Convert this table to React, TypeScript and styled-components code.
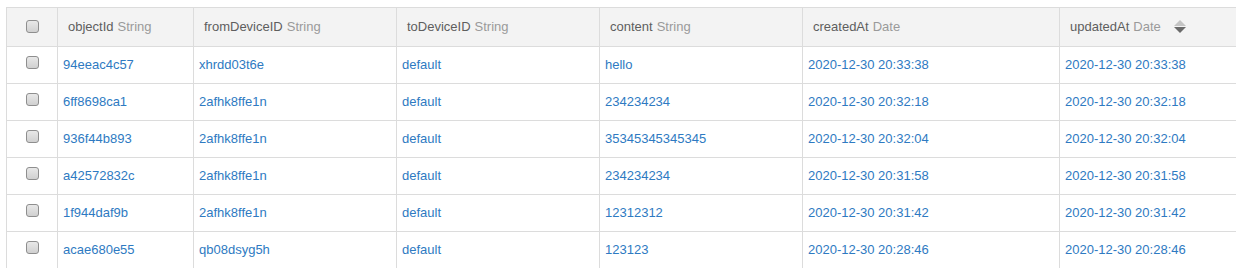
import React from "react";
import styled, { createGlobalStyle } from "styled-components";

const Global = createGlobalStyle`
  html, body { margin: 0; padding: 0; background: #fff; overflow: hidden; }
  body { font-family: "Liberation Sans", Arial, sans-serif; }
`;

const Page = styled.div`
  padding: 7px 0 0 6px;
  width: 1500px;
`;

const Table = styled.div`
  border-top: 1px solid #dcdcdc;
  border-right: 1px solid #dcdcdc;
`;

const COLS = "51px 136px 203px 203px 203px 257px 1fr";

const Row = styled.div<{ $head?: boolean }>`
  display: grid;
  grid-template-columns: ${COLS};
  height: ${(p) => (p.$head ? 38 : 36)}px;
  border-bottom: 1px solid #dcdcdc;
  background: ${(p) => (p.$head ? "#f3f3f3" : "#fff")};
`;

const HeadCell = styled.div`
  display: flex;
  align-items: center;
  padding-left: 10px;
  padding-bottom: 2px;
  border-left: 1px solid #dcdcdc;
  font-size: 13px;
  color: #5e5e5e;
  white-space: nowrap;
`;

const TypeName = styled.span`
  color: #9a9a9a;
  margin-left: 4px;
`;

const Cell = styled.div`
  display: flex;
  align-items: center;
  padding-left: 5px;
  padding-bottom: 1px;
  border-left: 1px solid #dcdcdc;
  font-size: 13px;
  color: #2e7ac2;
  white-space: nowrap;
`;

const CheckCell = styled.div<{ $head?: boolean }>`
  display: flex;
  align-items: center;
  justify-content: center;
  border-left: 1px solid #dcdcdc;
  padding-bottom: ${(p) => (p.$head ? 2 : 6)}px;
`;

const Check = styled.input.attrs({ type: "checkbox" })`
  appearance: none;
  margin: 0;
  width: 13px;
  height: 13px;
  border: 1px solid #8e8e8e;
  border-radius: 3px;
  background: linear-gradient(#e8e8e8, #d0d0d0);
  box-sizing: border-box;
`;

const SortIcon = styled.svg`
  margin-left: 13px;
  width: 12px;
  height: 13px;
  flex: none;
`;

const headers: [string, string][] = [
  ["objectId", "String"],
  ["fromDeviceID", "String"],
  ["toDeviceID", "String"],
  ["content", "String"],
  ["createdAt", "Date"],
  ["updatedAt", "Date"],
];

const rows = [
  ["94eeac4c57", "xhrdd03t6e", "default", "hello", "2020-12-30 20:33:38"],
  ["6ff8698ca1", "2afhk8ffe1n", "default", "234234234", "2020-12-30 20:32:18"],
  ["936f44b893", "2afhk8ffe1n", "default", "35345345345345", "2020-12-30 20:32:04"],
  ["a42572832c", "2afhk8ffe1n", "default", "234234234", "2020-12-30 20:31:58"],
  ["1f944daf9b", "2afhk8ffe1n", "default", "12312312", "2020-12-30 20:31:42"],
  ["acae680e55", "qb08dsyg5h", "default", "123123", "2020-12-30 20:28:46"],
];

export default function App() {
  return (
    <>
      <Global />
      <Page>
        <Table>
          <Row $head>
            <CheckCell $head>
              <Check />
            </CheckCell>
            {headers.map(([name, type], i) => (
              <HeadCell key={name}>
                {name}
                <TypeName>{type}</TypeName>
                {i === headers.length - 1 && (
                  <SortIcon viewBox="0 0 12 13">
                    <path d="M6 0 L12 6 L0 6 Z" fill="#c4c4c4" />
                    <path d="M0 7 L12 7 L6 13 Z" fill="#6a6a6a" />
                  </SortIcon>
                )}
              </HeadCell>
            ))}
          </Row>
          {rows.map((r) => (
            <Row key={r[0]}>
              <CheckCell>
                <Check />
              </CheckCell>
              <Cell>{r[0]}</Cell>
              <Cell>{r[1]}</Cell>
              <Cell>{r[2]}</Cell>
              <Cell>{r[3]}</Cell>
              <Cell>{r[4]}</Cell>
              <Cell>{r[4]}</Cell>
            </Row>
          ))}
        </Table>
      </Page>
    </>
  );
}
